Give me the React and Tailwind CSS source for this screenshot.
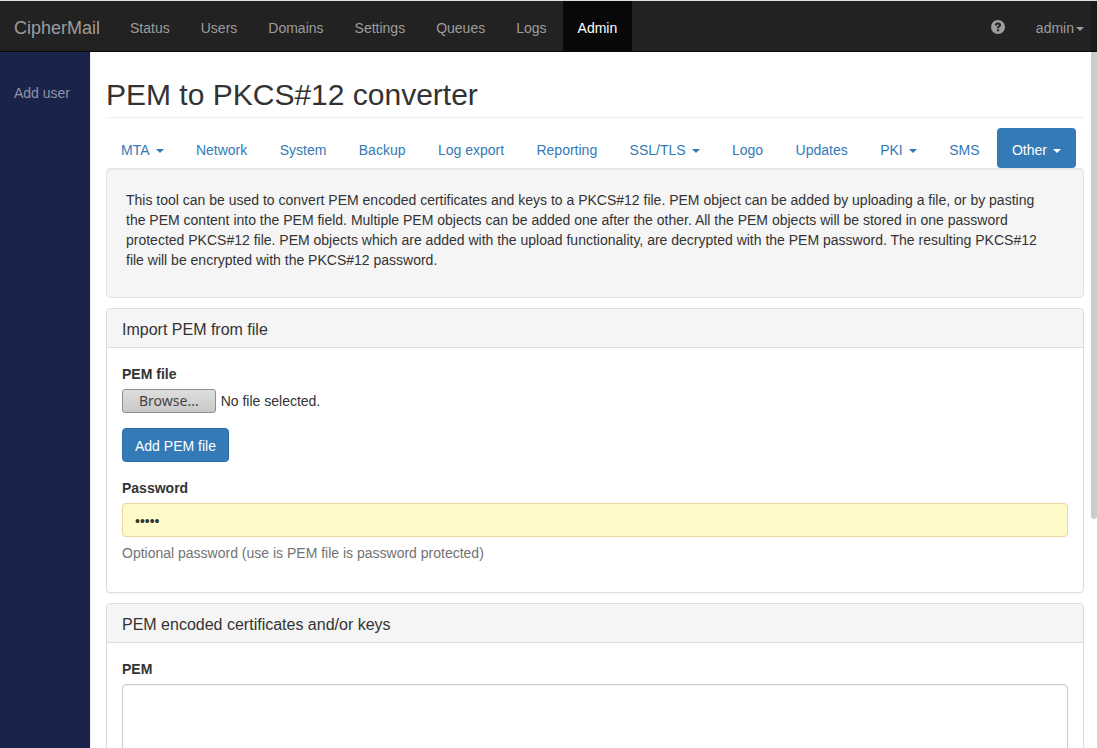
import { useState } from "react";

const mainNav = ["Status", "Users", "Domains", "Settings", "Queues", "Logs", "Admin"];

const tabs = [
  { name: "MTA", menu: true },
  { name: "Network" },
  { name: "System" },
  { name: "Backup" },
  { name: "Log export" },
  { name: "Reporting" },
  { name: "SSL/TLS", menu: true },
  { name: "Logo" },
  { name: "Updates" },
  { name: "PKI", menu: true },
  { name: "SMS" },
  { name: "Other", menu: true },
];

function Caret({ className = "" }) {
  return (
    <span
      aria-hidden="true"
      className={`inline-block border-x-4 border-t-4 border-x-transparent border-t-current align-middle ${className}`}
    />
  );
}

function HelpIcon() {
  return (
    <svg viewBox="0 0 14 14" className="size-3.5" aria-hidden="true">
      <path
        fill="currentColor"
        fillRule="evenodd"
        d="M7 0a7 7 0 1 1 0 14A7 7 0 0 1 7 0ZM7 2.6C5 2.6 3.9 3.7 3.9 5.6H6C6 4.9 6.3 4.5 7 4.5C7.5 4.5 7.8 4.8 7.8 5.2C7.8 5.6 7.5 5.8 7.1 6C6.2 6.5 5.9 7 5.9 8V8.3H8.1V8C8.1 7.6 8.3 7.3 8.8 7C9.7 6.5 10.1 5.9 10.1 5C10.1 3.5 8.9 2.6 7 2.6ZM5.9 9.2V11.3H8.1V9.2Z"
      />
    </svg>
  );
}

function Panel({ title, children }) {
  return (
    <section className="mb-2.5 rounded border border-[#ddd] bg-white shadow-xs">
      <header className="rounded-t border-b border-[#ddd] bg-[#f5f5f5] px-[15px] pt-3 pb-2">
        <h2 className="text-base leading-[18px]">{title}</h2>
      </header>
      <div className="p-[15px]">{children}</div>
    </section>
  );
}

function FieldLabel({ htmlFor, children }) {
  return (
    <label htmlFor={htmlFor} className="mb-[5px] block pt-px font-bold">
      {children}
    </label>
  );
}

export default function App() {
  const [password, setPassword] = useState("admin");
  const [fileName, setFileName] = useState("");

  return (
    <div className="relative flex h-screen flex-col overflow-hidden bg-white font-['Liberation_Sans',Arial,sans-serif] text-sm leading-5 text-[#333]">
      <nav className="flex shrink-0 border-t border-b border-t-[#dce3df] border-b-[#080808] bg-[#222] text-[#9d9d9d]">
        <a href="#" className="pt-[17px] pr-[15px] pb-[13px] pl-3.5 text-lg leading-5">
          CipherMail
        </a>
        <ul className="flex gap-px">
          {mainNav.map((name) => (
            <li key={name}>
              <a
                href="#"
                className={`block px-[15px] pt-[17px] pb-[13px] ${name === "Admin" ? "bg-[#080808] text-white" : ""}`}
              >
                {name}
              </a>
            </li>
          ))}
        </ul>
        <ul className="ml-auto flex pr-[13px]">
          <li>
            <a href="#" aria-label="Help" className="flex h-full items-center px-4 pt-0.5">
              <HelpIcon />
            </a>
          </li>
          <li>
            <a href="#" className="block pt-[17px] pb-[13px] pl-[15px]">
              admin
              <Caret className="ml-0.5" />
            </a>
          </li>
        </ul>
      </nav>

      <div className="flex min-h-0 flex-1">
        <aside className="w-[91px] shrink-0 border-r border-[#eee] bg-[#1a2349] pt-[31px] pl-3.5">
          <a href="#" className="text-[#8f93a8]">
            Add user
          </a>
        </aside>

        <main className="min-w-0 flex-1 overflow-hidden pr-[13px] pl-[15px]">
          <h1 className="mt-[26px] mb-2.5 border-b border-[#eee] pb-[6px] text-3xl leading-[33px]">
            PEM to PKCS#12 converter
          </h1>

          <ul className="flex max-w-[970px] justify-between">
            {tabs.map(({ name, menu }) => (
              <li key={name}>
                <a
                  href="#"
                  className={`block rounded px-[15px] pt-3 pb-2 whitespace-nowrap ${
                    name === "Other" ? "bg-[#337ab7] text-white" : "text-[#337ab7]"
                  }`}
                >
                  {name}
                  {menu && <Caret className="ml-1.5" />}
                </a>
              </li>
            ))}
          </ul>

          <div className="mb-2.5 rounded border border-[#e3e3e3] bg-[#f5f5f5] px-[19px] pt-[21px] pb-[17px] inset-shadow-xs">
            <p className="mb-2.5 pr-2.5">
              This tool can be used to convert PEM encoded certificates and keys to a PKCS#12 file. PEM object can be
              added by uploading a file, or by pasting the PEM content into the PEM field. Multiple PEM objects can be
              added one after the other. All the PEM objects will be stored in one password protected PKCS#12 file. PEM
              objects which are added with the upload functionality, are decrypted with the PEM password. The resulting
              PKCS#12 file will be encrypted with the PKCS#12 password.
            </p>
          </div>

          <Panel title="Import PEM from file">
            <FieldLabel htmlFor="pem-file">PEM file</FieldLabel>
            <div className="relative mb-[15px] flex items-center gap-[5px]">
              <input
                id="pem-file"
                type="file"
                className="peer sr-only"
                onChange={(e) => setFileName(e.target.files[0]?.name ?? "")}
              />
              <label
                htmlFor="pem-file"
                className="rounded-[3px] border border-[#8f8f8f] bg-linear-to-b from-[#dedede] to-[#c9c9c9] px-4 py-px font-['Noto_Sans','Open_Sans',sans-serif] text-[#444] peer-focus-visible:outline-2"
              >
                Browse...
              </label>
              <span>{fileName || "No file selected."}</span>
            </div>
            <button
              type="button"
              className="mb-[15px] block rounded border border-[#2e6da4] bg-[#337ab7] px-3 pt-[7px] pb-[5px] text-white"
            >
              Add PEM file
            </button>
            <FieldLabel htmlFor="password">Password</FieldLabel>
            <input
              id="password"
              type="password"
              value={password}
              onChange={(e) => setPassword(e.target.value)}
              className="block h-[34px] w-full rounded border border-[#ecd5a0] bg-[#fffbc8] px-3 pt-[7px] pb-[5px]"
            />
            <p className="mt-1.5 mb-3.5 text-[#737373]">Optional password (use is PEM file is password protected)</p>
          </Panel>

          <Panel title="PEM encoded certificates and/or keys">
            <FieldLabel htmlFor="pem">PEM</FieldLabel>
            <textarea
              id="pem"
              rows={10}
              className="block w-full rounded border border-[#ccc] bg-white px-3 py-1.5 inset-shadow-xs"
            />
          </Panel>
        </main>
      </div>

      <div aria-hidden="true" className="absolute top-0.5 right-0 h-[517px] w-1.5 rounded-full bg-black/20" />
    </div>
  );
}
